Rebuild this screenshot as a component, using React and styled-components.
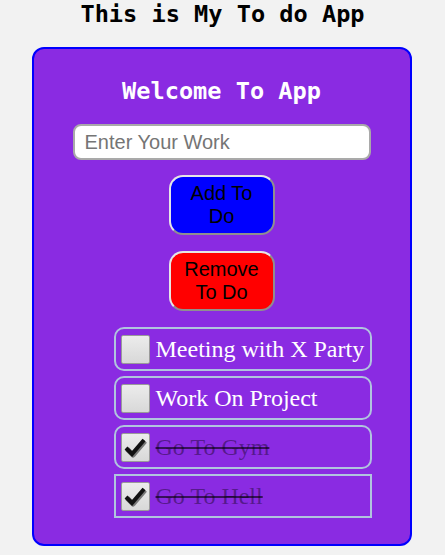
import React, { useState } from "react";
import styled, { createGlobalStyle } from "styled-components";

const GlobalStyle = createGlobalStyle`
  body {
    margin: 0;
    background: #f2f2f2;
    font-family: "Liberation Sans", Arial, sans-serif;
  }
`;

const Page = styled.div`
  display: flex;
  flex-direction: column;
  align-items: center;
`;

const Title = styled.h1`
  font-family: "DejaVu Sans Mono", "Liberation Mono", monospace;
  font-size: 23.6px;
  font-weight: bold;
  color: #000;
  margin: 0 0 18px;
  line-height: 29px;
`;

const Card = styled.div`
  width: 380px;
  box-sizing: border-box;
  background: #8a2be2;
  border: 2px solid #0000ff;
  border-radius: 12px;
  padding: 27px 0 26px;
  display: flex;
  flex-direction: column;
  align-items: center;
  margin-right: 2px;
`;

const Heading = styled.h2`
  font-family: "DejaVu Sans Mono", "Liberation Mono", monospace;
  font-size: 23.6px;
  font-weight: bold;
  color: #fff;
  margin: 0 0 18px;
  line-height: 30px;
`;

const Input = styled.input`
  width: 298px;
  height: 36px;
  box-sizing: border-box;
  border: 2px solid #a9a9a9;
  border-radius: 8px;
  padding: 0 10px;
  font-family: "Liberation Sans", Arial, sans-serif;
  font-size: 20px;
  outline: none;
  &::placeholder {
    color: #757575;
  }
`;

const Button = styled.button`
  width: 106px;
  height: 60px;
  margin-top: ${(p) => p.$gap}px;
  background: ${(p) => p.$bg};
  border: 2px solid;
  border-color: #e6e6e6 #8f8f8f #8f8f8f #e6e6e6;
  border-radius: 14px;
  font-family: "Liberation Sans", Arial, sans-serif;
  font-size: 20px;
  line-height: 23px;
  color: #000;
  padding: 0 8px;
`;

const List = styled.ul`
  list-style: none;
  width: 298px;
  box-sizing: border-box;
  margin: 16px 0 0 2px;
  padding: 0 0 0 40px;
  display: flex;
  flex-direction: column;
  gap: 5px;
`;

const Item = styled.li`
  height: 44px;
  box-sizing: border-box;
  border: 2px solid #b0c4de;
  border-radius: ${(p) => (p.$square ? 0 : 10)}px;
  display: flex;
  align-items: center;
  padding-left: 5px;
  gap: 6px;
`;

const Box = styled.span`
  width: 27px;
  height: 27px;
  flex: none;
  border: 1px solid #9a9a9a;
  border-radius: 2px;
  background: linear-gradient(#ececec, #d8d8d8);
  display: flex;
  align-items: center;
  justify-content: center;
`;

const Label = styled.span`
  font-family: "Liberation Serif", "Times New Roman", serif;
  font-size: 24px;
  white-space: nowrap;
  color: ${(p) => (p.$done ? "rgba(0,0,0,0.4)" : "#fff")};
  text-decoration: ${(p) => (p.$done ? "line-through" : "none")};
  text-decoration-color: ${(p) => (p.$done ? "rgba(0,0,0,0.6)" : "inherit")};
  text-decoration-thickness: 2px;
`;

const Check = () => (
  <svg width="24" height="22" viewBox="0 0 24 22">
    <path d="M3 12 L9 18 L21 4" fill="none" stroke="#777" strokeWidth="5" strokeLinejoin="round" transform="translate(1 1)" />
    <path d="M3 12 L9 18 L21 4" fill="none" stroke="#111" strokeWidth="4" strokeLinejoin="miter" />
  </svg>
);

const todos = [
  { text: "Meeting with X Party", done: false },
  { text: "Work On Project", done: false },
  { text: "Go To Gym", done: true },
  { text: "Go To Hell", done: true, square: true },
];

export default function App() {
  const [items] = useState(todos);
  return (
    <Page>
      <GlobalStyle />
      <Title>This is My To do App</Title>
      <Card>
        <Heading>Welcome To App</Heading>
        <Input placeholder="Enter Your Work" />
        <Button $bg="#0000ff" $gap={15}>Add To Do</Button>
        <Button $bg="#ff0000" $gap={16}>Remove To Do</Button>
        <List>
          {items.map((t) => (
            <Item key={t.text} $square={t.square}>
              <Box>{t.done && <Check />}</Box>
              <Label $done={t.done}>{t.text}</Label>
            </Item>
          ))}
        </List>
      </Card>
    </Page>
  );
}
